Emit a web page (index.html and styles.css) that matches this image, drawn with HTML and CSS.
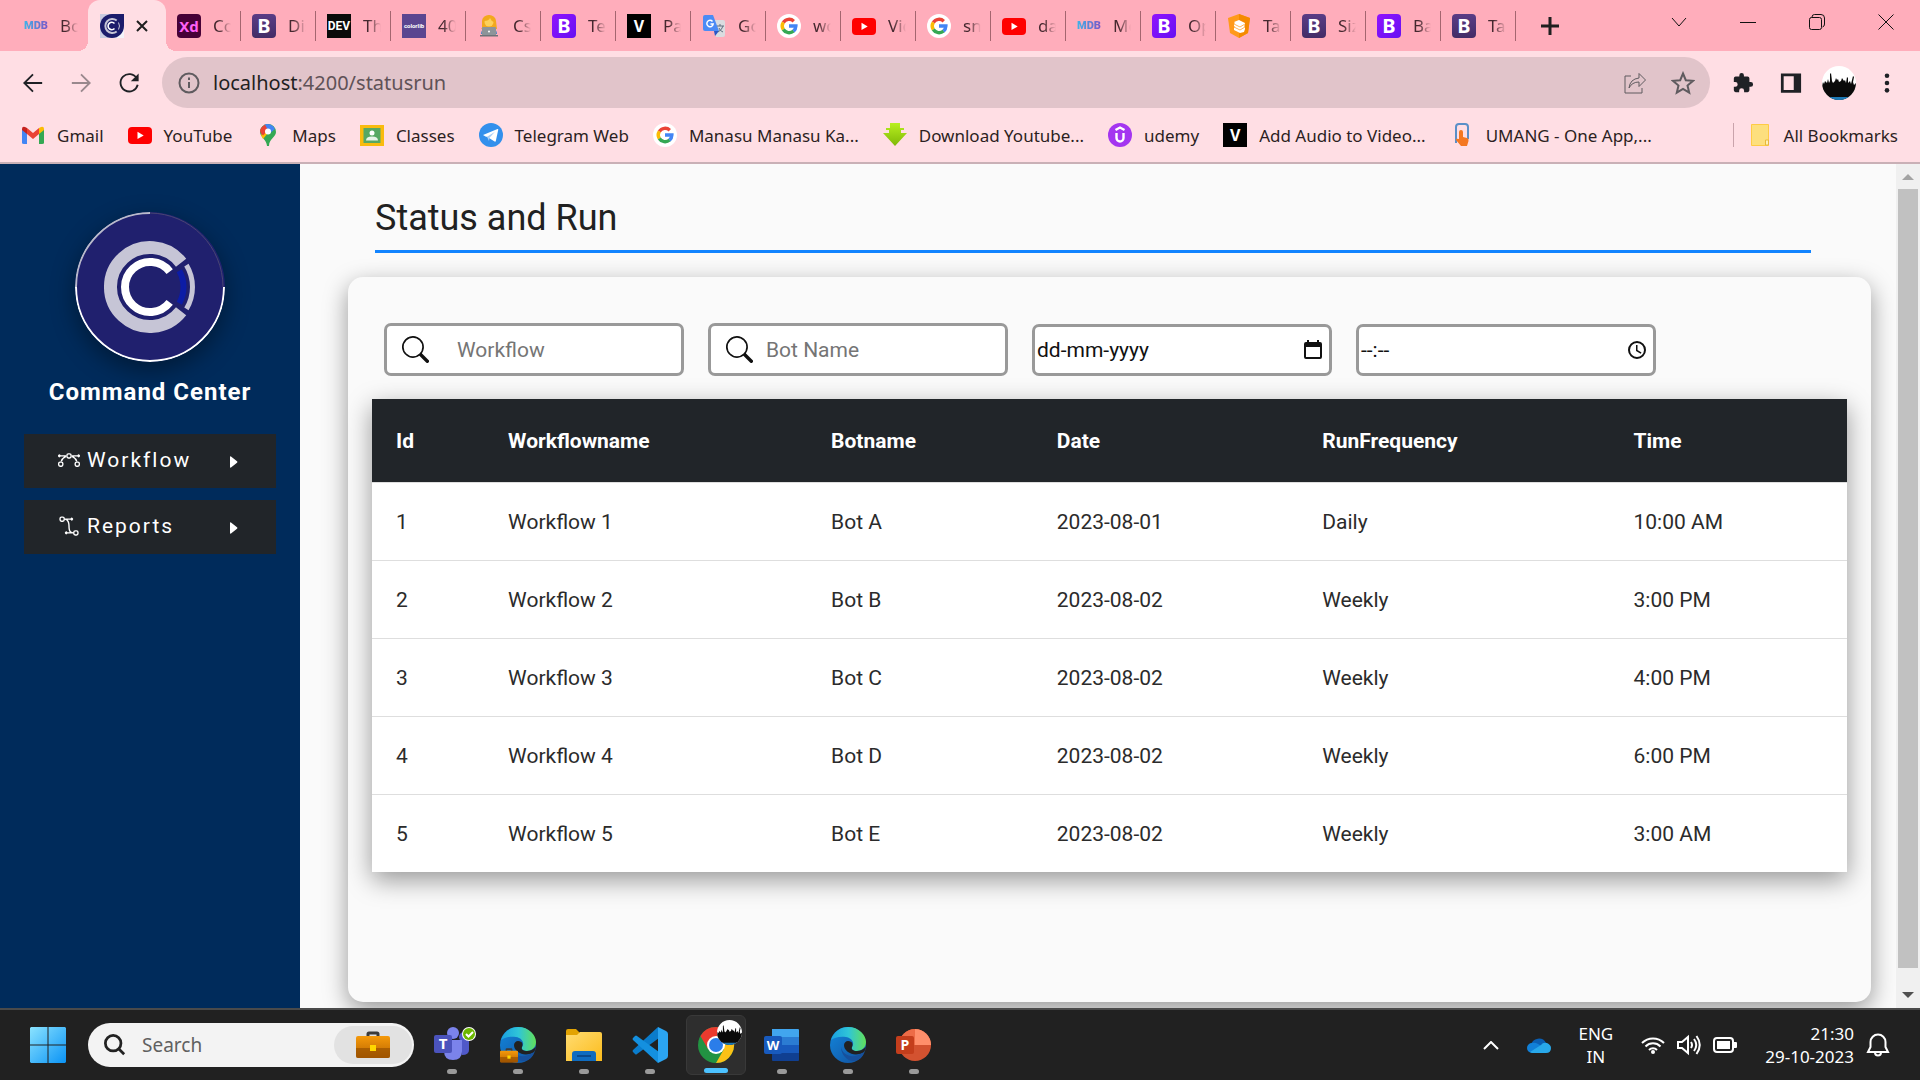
FILE: index.html
```html
<!DOCTYPE html>
<html lang="en">
<head>
<meta charset="utf-8">
<title>Status and Run</title>
<link rel="stylesheet" href="styles.css">
</head>
<body>
<svg class="defs" aria-hidden="true">
  <defs>
    <linearGradient id="win" x1="0" y1="0" x2="1" y2="1"><stop offset="0" stop-color="#8be3ff"/><stop offset="1" stop-color="#0a93f5"/></linearGradient>
    <linearGradient id="caseg" x1="0" y1="0" x2="0" y2="1"><stop offset="0" stop-color="#f59a0b"/><stop offset="1" stop-color="#b96400"/></linearGradient>
    <linearGradient id="edgeTop" x1="0" y1="0" x2="1" y2="0"><stop offset="0" stop-color="#1aa0e0"/><stop offset=".5" stop-color="#2fc5d8"/><stop offset="1" stop-color="#62e05a"/></linearGradient>
    <linearGradient id="edgeLow" x1="0" y1="0" x2="1" y2="1"><stop offset="0" stop-color="#1287dd"/><stop offset="1" stop-color="#124f9c"/></linearGradient>
    <linearGradient id="fold" x1="0" y1="0" x2="1" y2="1"><stop offset="0" stop-color="#ffdc72"/><stop offset="1" stop-color="#fcbc1c"/></linearGradient>
    <linearGradient id="down" x1="0" y1="0" x2="0" y2="1"><stop offset="0" stop-color="#b8ef1f"/><stop offset="1" stop-color="#7fb807"/></linearGradient>
  </defs>
  <symbol id="google" viewBox="0 0 24 24"><circle cx="12" cy="12" r="12" fill="#fff"/><g fill="none" stroke-width="3.4"><path stroke="#ea4335" d="M6.3 8.5A6.8 6.8 0 0 1 16.8 7.2"/><path stroke="#fbbc05" d="M6.3 15.6a6.8 6.8 0 0 1 0-7.2"/><path stroke="#34a853" d="M16.6 17a6.8 6.8 0 0 1-10.3-1.5"/><path stroke="#4285f4" d="M12 12h6.9a6.8 6.8 0 0 1-2.4 5.1"/></g></symbol>
  <symbol id="youtube" viewBox="0 0 24 24"><rect y="4" width="24" height="17" rx="4" fill="#f00"/><path fill="#fff" d="M9.5 8.8v7.2l6.2-3.6z"/></symbol>
  <symbol id="crowd" viewBox="0 0 34 34"><clipPath id="crowdclip"><circle cx="17" cy="17" r="17"/></clipPath><g clip-path="url(#crowdclip)"><path fill="#fff" d="M0 0h34v34H0z"/><path fill="#0a0a0a" d="M0 20l1-4 1 2 1-3 2 2 1-4 1 4 1-2V8l1-1 1 8 1 2 2-2 1-3 1 2 1-1 1 3 2-1 1-3 2 3 1-1 1 3 1-6 1 1v5l2-2 1 3 1-4 1-4 1 1-1 5 1 3 2-2v20H0z"/><path fill="#1d79b5" d="M5 31h24v3H5z"/></g></symbol>
  <symbol id="edge" viewBox="0 0 36 36"><circle cx="18" cy="18" r="18" fill="url(#edgeLow)"/><path fill="url(#edgeTop)" d="M1 13C4 4 11 0 18 0c11 0 18 8 18 15 0 6-5 9-9 9-5 0-6-2-5-4 3-4 0-9-6-10C9 9 4 11 1 13z"/><path fill="#212121" d="M18 14c5 0 5 4 4 6s1 4 5 4c3 0 5-1 9-4-1 4-2 6-4 6-8 4-18-1-18-8 0-2 2-4 4-4z"/><path fill="#17509c" d="M11 20c0 9 9 17 17 13 4-2 6-6 6-8-9 7-21 5-23-5z"/></symbol>
  <symbol id="briefcase" viewBox="0 0 34 28"><path fill="none" stroke="#3b3b3b" stroke-width="3" d="M12 5V3q0-1 1-1h8q1 0 1 1v2"/><rect y="5" width="34" height="22" rx="2" fill="url(#caseg)"/><path fill="#8f4b00" d="M0 17h34v8q0 2-2 2H2q-2 0-2-2z" opacity=".6"/><rect x="14" y="14" width="6" height="6" fill="#ffd800"/></symbol>
</svg>

<header class="browser">
  <div class="tabstrip">
    <nav class="tabs" aria-label="Tabs">
      <a class="tab tab-first" href="#"><span class="fav mdb">MDB</span><span class="label">Boot</span></a>
      <div class="tab active"><svg class="fav" viewBox="0 0 24 24"><path fill="#c9cbe0" d="M0 0h24v24H0z"/><path fill="#f4f4fa" d="M12 12h12v12H12z"/><path fill="#1c1c6b" d="M12 0h12v12a12 12 0 0 1-24 0A12 12 0 0 1 12 0z"/><g fill="none"><path stroke="#c6c5d6" stroke-width="2" d="M16.700 6.500a7 7 0 1 0 0 11"/><path stroke="#fff" stroke-width="1.600" d="M14.500 9.500a3.700 3.700 0 1 0 0 5"/><path stroke="#c6c5d6" d="M18.500 8.500a7 7 0 0 1 0 7"/></g></svg><button class="tab-close" aria-label="Close tab"><svg viewBox="0 0 12 12"><path d="M1 1l10 10M11 1L1 11"/></svg></button></div>
      <a class="tab" href="#"><span class="fav xd">Xd</span><span class="label">Com</span></a>
      <a class="tab" href="#"><span class="fav bs4">B</span><span class="label">Displ</span></a>
      <a class="tab" href="#"><span class="fav dev">DEV</span><span class="label">The</span></a>
      <a class="tab" href="#"><span class="fav colorlib">colorlib</span><span class="label">40 B</span></a>
      <a class="tab" href="#"><svg class="fav" viewBox="0 0 24 24"><path fill="#f2a81d" d="M5 14V7a7 6 0 0 1 14 0l1 8H4z"/><circle cx="12" cy="8" r="4.500" fill="#fdd05a"/><path fill="#f2a81d" d="M7 7q5 0 6-3 1 3 4 4V4l-5-3-5 3z"/><path fill="#3b82c4" d="M4 20q0-6 8-6t8 6z"/><rect x="5" y="13" width="14" height="9" rx="1" fill="#8e9499"/><path fill="#6e7378" d="M3 21h18v1.500H3z"/><circle cx="12" cy="17.500" r="1" fill="#fff"/></svg><span class="label">Css</span></a>
      <a class="tab" href="#"><span class="fav bs5">B</span><span class="label">Text</span></a>
      <a class="tab" href="#"><span class="fav vee">V</span><span class="label">Pass</span></a>
      <a class="tab" href="#"><svg class="fav" viewBox="0 0 24 24"><path fill="#dadce0" d="M9 6h12q2 0 2 2v13q0 2-2 2h-7z"/><path fill="#4c8bf5" d="M1 3q0-2 2-2h8l6 16H3q-2 0-2-2z"/><path fill="#2a56c6" d="M12 17h5l-4 5z"/><path fill="none" stroke="#fff" stroke-width="1.500" d="M10.500 7.500a3.200 3.200 0 1 0 .7 2.500H8.500"/><path fill="none" stroke="#607080" d="M15 12h7M18 10v2M21 12q-1 4-5 6M17 14q1 3 4 4"/></svg><span class="label">Goo</span></a>
      <a class="tab" href="#"><svg class="fav"><use href="#google"/></svg><span class="label">wor</span></a>
      <a class="tab" href="#"><svg class="fav"><use href="#youtube"/></svg><span class="label">Vide</span></a>
      <a class="tab" href="#"><svg class="fav"><use href="#google"/></svg><span class="label">sna</span></a>
      <a class="tab" href="#"><svg class="fav"><use href="#youtube"/></svg><span class="label">dat</span></a>
      <a class="tab" href="#"><span class="fav mdb">MDB</span><span class="label">Mo</span></a>
      <a class="tab" href="#"><span class="fav bs5">B</span><span class="label">Opa</span></a>
      <a class="tab" href="#"><svg class="fav" viewBox="0 0 24 24"><path fill="#ff9a1a" d="M12 0l11 4-2 15-9 5-9-5L1 4z"/><path fill="#f58a00" d="M12 0l11 4-2 15-9 5z"/><path fill="#fff" d="M7 8l5-2 6 3v2l-1 1 1 1v2l-1 3-4 1-6-3v-2l1-1-1-1v-2l1-1z"/><path stroke="#ffb65a" fill="none" d="M7 10l6 3 5-3M7 13l6 3 5-3"/></svg><span class="label">Tabl</span></a>
      <a class="tab" href="#"><span class="fav bs4">B</span><span class="label">Sizi</span></a>
      <a class="tab" href="#"><span class="fav bs5">B</span><span class="label">Bad</span></a>
      <a class="tab" href="#"><span class="fav bs4">B</span><span class="label">Tab</span></a>
    </nav>
    <button class="newtab" aria-label="New tab"><svg viewBox="0 0 18 18"><path d="M9 0v18M0 9h18"/></svg></button>
    <div class="winctl">
      <button aria-label="Search tabs"><svg viewBox="0 0 16 16"><path d="M1 4l7 8 7-8"/></svg></button>
      <button aria-label="Minimize"><svg viewBox="0 0 16 16"><path d="M0 8.500h16"/></svg></button>
      <button aria-label="Restore"><svg viewBox="0 0 16 16"><rect x=".5" y="3.500" width="12" height="12" rx="2"/><path d="M3 3.500V3q0-2.500 2.500-2.500H12q3.500 0 3.500 3.500v6q0 2.500-2 3"/></svg></button>
      <button aria-label="Close"><svg viewBox="0 0 16 16"><path d="M.5.5l15 15M15.500.5l-15 15"/></svg></button>
    </div>
  </div>
  <div class="toolbar">
    <button class="tool" aria-label="Back"><svg viewBox="0 0 24 24"><path d="M22 12H3M12 2.500L2.500 12l9.500 9.500"/></svg></button>
    <button class="tool dim" aria-label="Forward"><svg viewBox="0 0 24 24"><path d="M2 12h19M12 2.500l9.500 9.500-9.500 9.500"/></svg></button>
    <button class="tool" aria-label="Reload"><svg viewBox="0 0 24 24"><path d="M20.500 7A9.500 9.500 0 1 0 21.500 14"/><path class="solid" d="M22.500 1.500V10H14z"/></svg></button>
    <div class="omnibox">
      <svg class="i22" viewBox="0 0 22 22"><circle cx="11" cy="11" r="9.500"/><path d="M11 10v6M11 5.500v2.500"/></svg>
      <p class="url"><span>localhost</span>:4200/statusrun</p>
      <svg class="i24" viewBox="0 0 24 24"><path class="thin" d="M8 5H2v17h17v-5M6 17q1-9 10-10V2.500l6.500 6.500L16 15.500V11q-7 0-10 6z"/></svg>
      <svg class="i24" viewBox="0 0 24 24"><path d="M12 2.500l2.800 6.700 7.200.6-5.500 4.700 1.700 7.100L12 17.800l-6.200 3.800 1.700-7.100L2 9.800l7.200-.6z"/></svg>
    </div>
    <button class="tool" aria-label="Extensions"><svg viewBox="0 0 24 24"><path class="solid" d="M20.500 11H19V7a2 2 0 0 0-2-2h-4V3.500a2.500 2.500 0 0 0-5 0V5H4a2 2 0 0 0-2 2v3.800h1.500a2.700 2.700 0 0 1 0 5.400H2V20a2 2 0 0 0 2 2h3.800v-1.500a2.700 2.700 0 0 1 5.400 0V22H17a2 2 0 0 0 2-2v-4h1.500a2.500 2.500 0 0 0 0-5z"/></svg></button>
    <button class="tool" aria-label="Side panel"><svg viewBox="0 0 24 24"><path class="solid" fill-rule="evenodd" d="M1 1.500h22v21H1zM4 4.500v15h11v-15z"/></svg></button>
    <button class="tool avatar" aria-label="Profile"><svg><use href="#crowd"/></svg></button>
    <button class="tool" aria-label="Menu"><svg viewBox="0 0 24 24"><circle class="solid" cx="12" cy="4" r="2.500"/><circle class="solid" cx="12" cy="12" r="2.500"/><circle class="solid" cx="12" cy="20" r="2.500"/></svg></button>
  </div>
  <nav class="bookmarks" aria-label="Bookmarks">
    <a href="#"><svg class="fav" viewBox="0 0 24 24"><path fill="#4285f4" d="M1 20V6l5 4v11H3q-2 0-2-1z"/><path fill="#34a853" d="M23 20V6l-5 4v11h3q2 0 2-1z"/><path fill="#ea4335" d="M6 11V5l6 5 6-5v6l-6 5z"/><path fill="#c5221f" d="M1 7V6q0-3 3-2l2 1v6z"/><path fill="#fbbc04" d="M23 7V6q0-3-3-2l-2 1v6z"/></svg>Gmail</a>
    <a href="#"><svg class="fav"><use href="#youtube"/></svg>YouTube</a>
    <a href="#"><svg class="fav" viewBox="0 0 24 24"><path fill="#34a853" d="M4 9a8 8 0 0 1 16 0c0 5-7 7-7 14h-2C11 17 4 14 4 9z"/><path fill="#fbbc04" d="M5 12l9-10 3 2-10 12z"/><path fill="#4285f4" d="M8 2a8 8 0 0 1 11 4l-6 5z"/><path fill="#ea4335" d="M5.500 4.500L9 1.500l3 6-5 5-2-2q-2-3 .5-6z"/><circle cx="12" cy="8.500" r="3" fill="#fff"/></svg>Maps</a>
    <a href="#"><svg class="fav" viewBox="0 0 24 24"><path fill="#f9bb0e" d="M0 2h24v21H0z"/><path fill="#57a863" d="M3.500 5h17v15h-17z"/><circle cx="12" cy="10" r="2.500" fill="#fff"/><path fill="#e8f3e8" d="M6 17.500q0-4 6-4t6 4z"/></svg>Classes</a>
    <a href="#"><svg class="fav" viewBox="0 0 24 24"><circle cx="12" cy="12" r="12" fill="#3390ec"/><path fill="#fff" d="M4 12l14.500-6q1-.3.700 1l-2.400 11q-.3 1-1.200.5L8 13.700l-1 .1z"/><path fill="#a9cdf5" d="M8 13.700l8-5-5.500 6-.5 3.300z"/></svg>Telegram Web</a>
    <a href="#"><svg class="fav"><use href="#google"/></svg>Manasu Manasu Ka...</a>
    <a href="#"><svg class="fav" viewBox="0 0 24 24"><path fill="url(#down)" d="M7 0h10v5h4v2h-3v3h6L12 23 0 10h6V7H3V5h4z"/></svg>Download Youtube...</a>
    <a href="#"><svg class="fav" viewBox="0 0 24 24"><circle cx="12" cy="12" r="12" fill="#a435f0"/><path fill="none" stroke="#fff" stroke-width="2.400" d="M7.500 7L12 4.500 16.500 7M8.500 10v5a3.500 3.500 0 0 0 7 0v-5"/></svg>udemy</a>
    <a href="#"><span class="fav vee">V</span>Add Audio to Video...</a>
    <a href="#"><svg class="fav" viewBox="0 0 24 24"><path fill="none" stroke="#5a8fc8" stroke-width="2" d="M6 20V4q0-3 3-3h6q3 0 3 3v12"/><path fill="#f47721" d="M9 9q0-2 2-2t2 2v5l4 1q2 .5 1.500 3L17 23h-6l-5-6q-1-2 3-1z"/></svg>UMANG - One App,...</a>
    <a class="all" href="#"><svg class="fav" viewBox="0 0 24 24"><path fill="#fddf7e" stroke="#ffcb45" d="M3.500 1.500h17v21h-17z"/><path fill="#fff0b8" stroke="#e8b93a" d="M17.500 22v-5h3v5z"/></svg>All Bookmarks</a>
  </nav>
</header>

<div class="viewport">
  <aside class="sidebar">
    <svg class="logo" viewBox="0 0 150 150"><circle cx="75" cy="75" r="75" fill="#20206e"/><g fill="none"><path stroke="#4a4673" stroke-width="1" d="M75 1a74 74 0 0 1 73 74"/><path stroke="#b9bacb" stroke-width="2" d="M1 75A74 74 0 0 1 75 1"/><path stroke="#fff" stroke-width="2" d="M149 75A74 74 0 0 1 1 75"/><path stroke="#c6c5d6" stroke-width="13" d="M106.100 50.700a39.500 39.500 0 1 0 0 48.600"/><path stroke="#fff" stroke-width="8" d="M94.700 59.600a25 25 0 1 0 0 30.800"/><path stroke="#0c1ca6" stroke-width="6" d="M104.300 58.800a33.500 33.500 0 0 1 0 32.400"/><path stroke="#c6c5d6" stroke-width="5" d="M111.400 53.100a42.500 42.500 0 0 1 0 43.800"/></g></svg>
    <h2 class="brand">Command Center</h2>
    <nav class="menu">
      <button><svg class="i22" viewBox="0 0 16 16"><path fill-rule="evenodd" d="M0 10.500A1.500 1.500 0 0 1 1.500 9h1A1.500 1.500 0 0 1 4 10.500v1A1.500 1.500 0 0 1 2.500 13h-1A1.500 1.500 0 0 1 0 11.500v-1zm1.500-.5a.5.5 0 0 0-.5.500v1a.5.5 0 0 0 .5.500h1a.5.5 0 0 0 .5-.5v-1a.5.5 0 0 0-.5-.5h-1zm10.500.5A1.500 1.500 0 0 1 13.500 9h1a1.500 1.500 0 0 1 1.500 1.500v1a1.500 1.500 0 0 1-1.500 1.500h-1a1.500 1.500 0 0 1-1.500-1.500v-1zm1.500-.5a.5.5 0 0 0-.5.500v1a.5.5 0 0 0 .5.500h1a.5.5 0 0 0 .5-.5v-1a.5.5 0 0 0-.5-.5h-1zM6 4.500A1.500 1.500 0 0 1 7.500 3h1A1.500 1.500 0 0 1 10 4.500v1A1.500 1.500 0 0 1 8.500 7h-1A1.500 1.500 0 0 1 6 5.500v-1zM7.500 4a.5.5 0 0 0-.5.500v1a.5.5 0 0 0 .5.500h1a.5.5 0 0 0 .5-.5v-1a.5.5 0 0 0-.5-.5h-1z"/><path d="M6 4.500H1.866a1 1 0 1 0 0 1h2.668A6.517 6.517 0 0 0 1.814 9H2.500c.123 0 .244.015.358.043a5.517 5.517 0 0 1 3.185-3.185A1.503 1.503 0 0 1 6 5.500v-1zm3.957 1.358A1.500 1.500 0 0 0 10 5.500v-1h4.134a1 1 0 1 1 0 1h-2.668a6.517 6.517 0 0 1 2.720 3.500H13.500c-.123 0-.243.015-.358.043a5.517 5.517 0 0 0-3.185-3.185z"/></svg><span>Workflow</span><svg class="caret" viewBox="0 0 8 12"><path d="M0 1v10q0 1 1 .6l6-4.800q1-.8 0-1.600L1 .4Q0 0 0 1z"/></svg></button>
      <button><svg class="i22" viewBox="0 0 16 16"><path fill-rule="evenodd" d="M1 2.500A1.500 1.500 0 0 1 2.500 1h1A1.500 1.500 0 0 1 5 2.500h4.134a1 1 0 1 1 0 1h-2.010c.18.18.34.381.484.605.638.992.892 2.354.892 3.895 0 1.993.257 3.092.713 3.700.356.476.895.721 1.787.784A1.500 1.500 0 0 1 12.500 11h1a1.500 1.500 0 0 1 1.500 1.500v1a1.500 1.500 0 0 1-1.500 1.500h-1a1.500 1.500 0 0 1-1.500-1.500H6.866a1 1 0 1 1 0-1h1.711a2.839 2.839 0 0 1-.165-.2C7.743 11.407 7.500 10.007 7.500 8c0-1.460-.246-2.597-.733-3.355-.39-.605-.952-1-1.767-1.112A1.500 1.500 0 0 1 3.500 5h-1A1.500 1.500 0 0 1 1 3.500v-1zM2.500 2a.5.5 0 0 0-.5.500v1a.5.5 0 0 0 .5.500h1a.5.5 0 0 0 .5-.5v-1a.5.5 0 0 0-.5-.5h-1zm10 10a.5.5 0 0 0-.5.500v1a.5.5 0 0 0 .5.500h1a.5.5 0 0 0 .5-.5v-1a.5.5 0 0 0-.5-.5h-1z"/></svg><span>Reports</span><svg class="caret" viewBox="0 0 8 12"><path d="M0 1v10q0 1 1 .6l6-4.800q1-.8 0-1.600L1 .4Q0 0 0 1z"/></svg></button>
    </nav>
  </aside>

  <main class="page">
    <h1>Status and Run</h1>
    <section class="card">
      <form class="filters">
        <label class="field wide"><svg viewBox="0 0 16 16"><path d="M11.742 10.344a6.500 6.500 0 1 0-1.397 1.398h-.001c.03.04.062.078.098.115l3.850 3.850a1 1 0 0 0 1.415-1.414l-3.850-3.850a1.007 1.007 0 0 0-.115-.1zM12 6.500a5.500 5.500 0 1 1-11 0 5.500 5.500 0 0 1 11 0z"/></svg><input type="text" placeholder="Workflow" aria-label="Workflow"></label>
        <label class="field"><svg viewBox="0 0 16 16"><path d="M11.742 10.344a6.500 6.500 0 1 0-1.397 1.398h-.001c.03.04.062.078.098.115l3.850 3.850a1 1 0 0 0 1.415-1.414l-3.850-3.850a1.007 1.007 0 0 0-.115-.1zM12 6.500a5.500 5.500 0 1 1-11 0 5.500 5.500 0 0 1 11 0z"/></svg><input type="text" placeholder="Bot Name" aria-label="Bot Name"></label>
        <label class="field picker"><input type="text" placeholder="dd-mm-yyyy" aria-label="Date"><svg viewBox="0 0 18 20"><path fill-rule="evenodd" d="M2 2h1V0h2v2h8V0h2v2h1q2 0 2 2v13q0 2-2 2H2q-2 0-2-2V4q0-2 2-2zm0 5v10h14V7z"/></svg></label>
        <label class="field picker"><input type="text" placeholder="--:--" aria-label="Time"><svg viewBox="0 0 20 20"><path fill-rule="evenodd" d="M10 1a9 9 0 1 0 0 18 9 9 0 0 0 0-18zm0 2a7 7 0 1 1 0 14 7 7 0 0 1 0-14z"/><path d="M9 5h1.500v5l4 2.500-.8 1.200L9 11z"/></svg></label>
      </form>
      <table>
        <colgroup><col class="c-id"><col class="c-flow"><col class="c-bot"><col class="c-date"><col class="c-freq"><col></colgroup>
        <thead><tr><th scope="col">Id</th><th scope="col">Workflowname</th><th scope="col">Botname</th><th scope="col">Date</th><th scope="col">RunFrequency</th><th scope="col">Time</th></tr></thead>
        <tbody>
          <tr><td>1</td><td>Workflow 1</td><td>Bot A</td><td>2023-08-01</td><td>Daily</td><td>10:00 AM</td></tr>
          <tr><td>2</td><td>Workflow 2</td><td>Bot B</td><td>2023-08-02</td><td>Weekly</td><td>3:00 PM</td></tr>
          <tr><td>3</td><td>Workflow 3</td><td>Bot C</td><td>2023-08-02</td><td>Weekly</td><td>4:00 PM</td></tr>
          <tr><td>4</td><td>Workflow 4</td><td>Bot D</td><td>2023-08-02</td><td>Weekly</td><td>6:00 PM</td></tr>
          <tr><td>5</td><td>Workflow 5</td><td>Bot E</td><td>2023-08-02</td><td>Weekly</td><td>3:00 AM</td></tr>
        </tbody>
      </table>
    </section>
  </main>

  <div class="scrollbar" aria-hidden="true">
    <svg viewBox="0 0 12 6"><path fill="#a3a3a3" d="M6 0l6 6H0z"/></svg>
    <div class="thumb"></div>
    <svg viewBox="0 0 12 6"><path fill="#505050" d="M0 0h12L6 6z"/></svg>
  </div>
</div>

<footer class="taskbar">
  <button class="start" aria-label="Start"><svg viewBox="0 0 35 35"><path fill="url(#win)" d="M1 0h16v17H0V1zM18 0h16l1 1v16H18zM0 18h17v17H1l-1-1zM18 18h17v16l-1 1H18z"/></svg></button>
  <label class="search">
    <svg class="lens" viewBox="0 0 24 24"><circle cx="10" cy="10" r="8.500"/><path d="M16 16l6 6"/></svg>
    <input type="text" placeholder="Search" aria-label="Search">
    <span class="pill"><svg><use href="#briefcase"/></svg></span>
  </label>
  <div class="apps">
    <button class="teams" aria-label="Teams"><svg viewBox="6 0 42 36"><circle cx="36" cy="10" r="5" fill="#5059c9"/><path fill="#5059c9" d="M30 14h11v9q0 5-7 5z"/><circle cx="25" cy="6" r="6" fill="#7b83eb"/><path fill="#7b83eb" d="M16 13h18v11q0 9-9 9t-9-9z"/><rect x="6" y="8" width="18" height="18" rx="2" fill="#4b53bc"/><text x="15" y="22" text-anchor="middle" font-family="Open Sans, sans-serif" font-weight="700" font-size="15" fill="#fff">T</text><circle cx="41" cy="7" r="7" fill="#fff"/><circle cx="41" cy="7" r="6" fill="#6bb700"/><path fill="none" stroke="#fff" stroke-width="2" d="M38 7l2.500 2.500L45 5"/></svg></button>
    <button aria-label="Edge work"><svg viewBox="0 0 36 36"><use href="#edge"/><use href="#briefcase" y="21" width="18" height="15"/></svg></button>
    <button aria-label="File Explorer"><svg viewBox="0 0 36 36"><path fill="#e2a303" d="M0 8V4q0-2 2-2h8l4 4h20v4H0z"/><path fill="url(#fold)" d="M0 8h11l3-3h20q2 0 2 2v27H0z"/><path fill="#0f6cc0" d="M6 34v-7q0-3 3-3h18q3 0 3 3v7z"/><path stroke="#0a4a8c" stroke-width="2" d="M11 29h14"/></svg></button>
    <button aria-label="Visual Studio Code"><svg viewBox="0 0 36 36"><path fill="#0a7ccc" d="M26 0L1 23q-1 1 0 2l2 2q1 1 2 0L27 11z"/><path fill="#1490df" d="M26 36L1 13q-1-1 0-2l2-2q1-1 2 0l22 16z"/><path fill="#2bA5f2" d="M26 0l8 4q2 1 2 3v22q0 2-2 3l-8 4z"/></svg></button>
    <button class="current" aria-label="Chrome"><svg viewBox="0 0 44 36"><circle cx="18" cy="18" r="18" fill="#229342"/><path fill="#fbc116" d="M33.600 9A18 18 0 0 1 18 36l8-14-8-13z"/><path fill="#ea3a2e" d="M2.400 9L10 22l8-13h15.600A18 18 0 0 0 2.400 9z"/><circle cx="18" cy="18" r="9" fill="#fff"/><circle cx="18" cy="18" r="7" fill="#2b7de9"/><use href="#crowd" x="19" y="-7" width="25" height="25"/></svg></button>
    <button aria-label="Word"><svg viewBox="0 0 36 36"><path fill="#41a5ee" d="M8 2h26q1 0 1 1v7H8z"/><path fill="#2b7cd3" d="M8 10h27v8H8z"/><path fill="#185abd" d="M8 18h27v8H8z"/><path fill="#103f91" d="M8 26h27v7q0 1-1 1H9q-1 0-1-1z"/><rect y="9" width="18" height="18" rx="2" fill="#185abd"/><text x="9" y="23" text-anchor="middle" font-family="Open Sans, sans-serif" font-weight="700" font-size="13" fill="#fff">W</text></svg></button>
    <button aria-label="Edge"><svg viewBox="0 0 36 36"><use href="#edge"/></svg></button>
    <button aria-label="PowerPoint"><svg viewBox="0 0 36 36"><circle cx="19" cy="18" r="16" fill="#d35230"/><path fill="#ff8f6b" d="M19 2a16 16 0 0 1 16 16H19z"/><path fill="#ed6c47" d="M19 2v16H3A16 16 0 0 1 19 2z"/><rect y="9" width="18" height="18" rx="2" fill="#c43e1c"/><text x="9" y="23" text-anchor="middle" font-family="Open Sans, sans-serif" font-weight="700" font-size="14" fill="#fff">P</text></svg></button>
  </div>
  <div class="tray">
    <svg class="up" viewBox="0 0 16 9"><path d="M1 8l7-7 7 7"/></svg>
    <svg class="cloud" viewBox="0 0 24 16"><path fill="#0a5fb4" d="M4 8a8 8 0 0 1 15-2l-7 6z"/><path fill="#1180d8" d="M5 16A5 5 0 0 1 5 6q3-1 6 1l9 5z"/><path fill="#28a8ea" d="M3 15l11-7q2-3 6-2 4 2 4 5 0 5-5 5H5z"/></svg>
    <p class="lang">ENG<br>IN</p>
    <svg class="i24" viewBox="0 0 24 24"><path d="M1 10a15.500 15.500 0 0 1 22 0M4.500 13.500a10.500 10.500 0 0 1 15 0M8 17a5.600 5.600 0 0 1 8 0"/><circle class="dot" cx="12" cy="19" r="2"/></svg>
    <svg class="i24" viewBox="0 0 24 24"><path d="M1 9v6h4l6 5V4L5 9zM14 9q2 3 0 6M17 6q4.500 6 0 12M19.500 3q6.500 9 0 18"/></svg>
    <svg class="i24" viewBox="0 0 24 24"><rect x="1" y="5" width="19" height="14" rx="3"/><path class="dot" d="M4 8h13v8H4zM21 9h2q1 0 1 1v4q0 1-1 1h-2z"/></svg>
    <p class="clock">21:30<br>29-10-2023</p>
    <svg class="i24" viewBox="0 0 24 24"><path d="M2 19h20l-2.500-5V9a7.500 7.500 0 0 0-15 0v5zM9 19.500a3 3 0 0 0 6 0"/></svg>
  </div>
</footer>
</body>
</html>
```
FILE: styles.css
```css
* { box-sizing: border-box; }
body {
  margin: 0;
  min-height: 100vh;
  display: flex;
  flex-direction: column;
  font-family: Roboto, "Liberation Sans", sans-serif;
  color: #212121;
}
h1, h2, p { margin: 0; font-weight: 400; }
a { color: inherit; text-decoration: none; }
button { border: 0; padding: 0; background: none; font: inherit; color: inherit; }
input { border: 0; padding: 0; min-width: 0; background: none; font: inherit; color: inherit; outline: 0; }
svg { display: block; flex: none; }
.defs { position: absolute; width: 0; height: 0; }
.i22 { width: 22px; height: 22px; }
.i24 { width: 24px; height: 24px; }

/* Browser frame */
.browser {
  background: #ffdee4;
  border-bottom: 2px solid #c9b0b6;
  font-family: "Noto Sans", "Open Sans", sans-serif;
  font-size: 17px;
}
.tabstrip { display: flex; height: 51px; background: #ffadbb; padding-left: 13px; }
.tabs { display: flex; }
.tab {
  position: relative;
  display: flex;
  align-items: center;
  width: 75px;
  height: 51px;
  padding-left: 11px;
  gap: 12px;
  color: #45282f;
}
.tab:not(.tab-first):not(.active)::after {
  content: "";
  position: absolute;
  right: 0;
  top: 11px;
  width: 1px;
  height: 30px;
  background: #a4656f;
}
.tab.active {
  width: 78px;
  padding-left: 12px;
  background: #ffdee4;
  border-radius: 12px 12px 0 0;
}
.tab.active::before, .tab.active::after {
  content: "";
  position: absolute;
  bottom: 0;
  width: 10px;
  height: 10px;
}
.tab.active::before { left: -10px; background: radial-gradient(circle at 0 0, #ffadbb 10px, #ffdee4 10px); }
.tab.active::after { right: -10px; background: radial-gradient(circle at 100% 0, #ffadbb 10px, #ffdee4 10px); }
.label {
  width: 18px;
  padding-bottom: 1px;
  overflow: hidden;
  white-space: nowrap;
  -webkit-mask-image: linear-gradient(90deg, #000 30%, transparent);
  mask-image: linear-gradient(90deg, #000 30%, transparent);
}
.tab-close svg { width: 12px; height: 12px; stroke: #1f1f1f; stroke-width: 2; }
.fav {
  width: 24px;
  height: 24px;
  flex: none;
  display: block;
  text-align: center;
  line-height: 24px;
  color: #fff;
  font-weight: 700;
}
.xd { background: #470137; color: #ff61f6; border-radius: 4px; font-size: 15px; }
.bs4 { background: linear-gradient(#5a3d86, #432c66); border-radius: 4px; font-size: 20px; }
.bs5 { background: linear-gradient(135deg, #9013fe, #6610f2); border-radius: 4px; font-size: 20px; }
.dev { background: #0a0a0a; font: 700 12px/24px Roboto, sans-serif; }
.colorlib { background: #5b4590; font: 700 6px/24px Roboto, sans-serif; }
.vee { background: #000; font-size: 16px; }
.mdb {
  background: linear-gradient(90deg, #3fb3e8, #7a55c7);
  -webkit-background-clip: text;
  background-clip: text;
  color: transparent;
  font: 900 11px/24px Roboto, sans-serif;
}
.newtab { width: 68px; display: grid; place-items: center; }
.newtab svg { width: 18px; height: 18px; stroke: #1f1f1f; stroke-width: 3; }
.winctl { margin-left: auto; display: flex; height: 43px; }
.winctl button { width: 69px; display: grid; place-items: center; }
.winctl svg { width: 16px; height: 16px; fill: none; stroke: #111; stroke-width: 1; }

.toolbar { display: flex; align-items: center; height: 63px; padding: 0 9px; }
.tool { width: 48px; height: 48px; display: grid; place-items: center; }
.tool svg { width: 22px; height: 22px; fill: none; stroke: #1f2125; stroke-width: 2; }
.tool .solid { fill: #1f2125; stroke: none; }
.dim { opacity: .45; }
.tool.avatar svg { width: 34px; height: 34px; stroke: none; }
.omnibox {
  flex: 1;
  display: flex;
  align-items: center;
  gap: 24px;
  height: 51px;
  margin: 0 9px;
  padding: 0 15px 0 16px;
  border-radius: 26px;
  background: #e1c4ca;
}
.omnibox svg { fill: none; stroke: #5f5b5f; stroke-width: 2; }
.omnibox .thin { stroke-width: 1; }
.url { flex: 1; margin-left: -11px; font-size: 20px; color: #5f5257; }
.url span { color: #1f1f1f; }
.bookmarks {
  display: flex;
  align-items: center;
  gap: 24px;
  height: 48px;
  padding: 0 22px 6px 21px;
  color: #2c1e22;
}
.bookmarks a { display: flex; align-items: center; gap: 12px; white-space: nowrap; }
.bookmarks .all { margin-left: auto; padding-left: 14px; border-left: 1px solid #c9a3ab; }

/* Application */
.viewport { flex: 1; display: flex; background: #fafafa; overflow: hidden; }
.sidebar {
  width: 300px;
  flex: none;
  padding: 48px 24px 24px;
  background: #002b5b;
  color: #fff;
  display: flex;
  flex-direction: column;
  align-items: center;
}
.logo { width: 150px; height: 150px; border-radius: 50%; box-shadow: 0 8px 24px rgba(0, 0, 0, .4); }
.brand { margin-top: 14px; font-size: 24px; line-height: 32px; font-weight: 700; letter-spacing: 1px; }
.menu { display: grid; gap: 12px; margin-top: 26px; width: 100%; }
.menu button {
  display: flex;
  align-items: center;
  gap: 7px;
  height: 54px;
  padding: 0 38px 3px 34px;
  background: #212529;
  font-size: 21px;
  letter-spacing: 2px;
}
.menu svg { fill: #fff; }
.menu .caret { width: 8px; height: 12px; margin: 4px 0 0 auto; }

.page { flex: 1; min-width: 0; display: flex; flex-direction: column; padding: 30px 25px 6px 48px; }
.page h1 {
  margin: 0 60px 24px 27px;
  padding-bottom: 8px;
  border-bottom: 3px solid #1284ff;
  font-size: 36px;
  line-height: 48px;
}
.card {
  flex: 1;
  padding: 46px 24px 24px;
  border-radius: 15px;
  background: #fafafa;
  box-shadow: 0 8px 24px rgba(0, 0, 0, .4);
}
.filters { display: flex; align-items: flex-end; gap: 24px; margin: 0 12px 23px; }
.field {
  flex: 0 1 300px;
  min-width: 0;
  display: flex;
  align-items: center;
  gap: 13px;
  height: 53px;
  padding: 0 16px 0 15px;
  border: 3px solid #999;
  border-radius: 7px;
  background: #fff;
  font-size: 21px;
}
.field svg { width: 27px; height: 27px; fill: #111; }
.field input { flex: 1; width: 0; height: 44px; }
.field input::placeholder { color: #757575; opacity: 1; }
.field.wide { gap: 28px; }
.field.picker { height: 52px; padding: 0 6px 0 2px; }
.picker svg { width: 20px; height: 20px; }
.field.picker input::placeholder { color: #111; }

table {
  width: 100%;
  table-layout: fixed;
  border-collapse: collapse;
  background: #fff;
  box-shadow: 0 8px 24px rgba(0, 0, 0, .4);
  font-size: 21px;
  line-height: 30px;
}
.c-id { width: 7.600%; }
.c-flow { width: 21.900%; }
.c-bot { width: 15.300%; }
.c-date { width: 18%; }
.c-freq { width: 21.100%; }
th, td { padding: 2px 24px 0; text-align: left; }
th { height: 83px; background: #212529; color: #fff; font-weight: 700; }
td { height: 78px; border-top: 1px solid #dedede; color: #2b2b2b; }

.scrollbar {
  width: 24px;
  flex: none;
  display: flex;
  flex-direction: column;
  align-items: center;
  gap: 9px;
  padding: 10px 0;
  background: #f0f0f0;
}
.scrollbar svg { width: 12px; height: 6px; }
.thumb { flex: 1; width: 20px; margin-bottom: 15px; background: #c1c1c1; }

/* Desktop taskbar */
.taskbar {
  display: flex;
  align-items: center;
  height: 72px;
  padding: 0 30px;
  background: #212121;
  border-top: 2px solid #4a4a4a;
  color: #fff;
  font-family: "Noto Sans", "Open Sans", sans-serif;
}
.start svg { width: 36px; height: 36px; }
.search {
  display: flex;
  align-items: center;
  width: 326px;
  height: 44px;
  margin-left: 22px;
  padding: 3px 2px 3px 16px;
  border-radius: 22px;
  background: #f3f3f3;
}
.lens { width: 22px; height: 22px; fill: none; stroke: #222; stroke-width: 3; }
.search input { flex: 1; margin-left: 16px; font-size: 19px; color: #222; }
.search input::placeholder { color: #606060; opacity: 1; }
.pill { display: grid; place-items: center; width: 78px; height: 38px; border-radius: 19px; background: #e2e2e2; }
.pill svg { width: 34px; height: 28px; }
.apps { display: flex; gap: 6px; margin-left: 8px; }
.apps button {
  position: relative;
  width: 60px;
  height: 60px;
  border-radius: 6px;
  display: grid;
  place-items: center;
}
.apps svg { width: 36px; height: 36px; overflow: visible; }
.apps .teams svg { width: 42px; margin-left: 6px; }
.apps .current { background: #2e2e2e; border: 1px solid #393939; }
.apps .current svg { width: 44px; margin-left: 8px; }
.apps button::after {
  content: "";
  position: absolute;
  bottom: 1px;
  left: 50%;
  width: 10px;
  height: 5px;
  margin-left: -5px;
  border-radius: 3px;
  background: #9a9a9a;
}
.apps .current::after { width: 24px; margin-left: -12px; background: #4cc2ff; }
.tray { display: flex; align-items: center; gap: 12px; margin-left: auto; font-size: 17px; line-height: 23px; }
.tray .i24 { fill: none; stroke: #fff; stroke-width: 2; }
.tray .dot { fill: #fff; stroke: none; }
.up { width: 16px; height: 9px; fill: none; stroke: #fff; stroke-width: 2; }
.cloud { width: 24px; height: 16px; margin: 0 16px; }
.lang { text-align: center; margin-right: 16px; }
.clock { text-align: right; margin-left: 16px; }
```
